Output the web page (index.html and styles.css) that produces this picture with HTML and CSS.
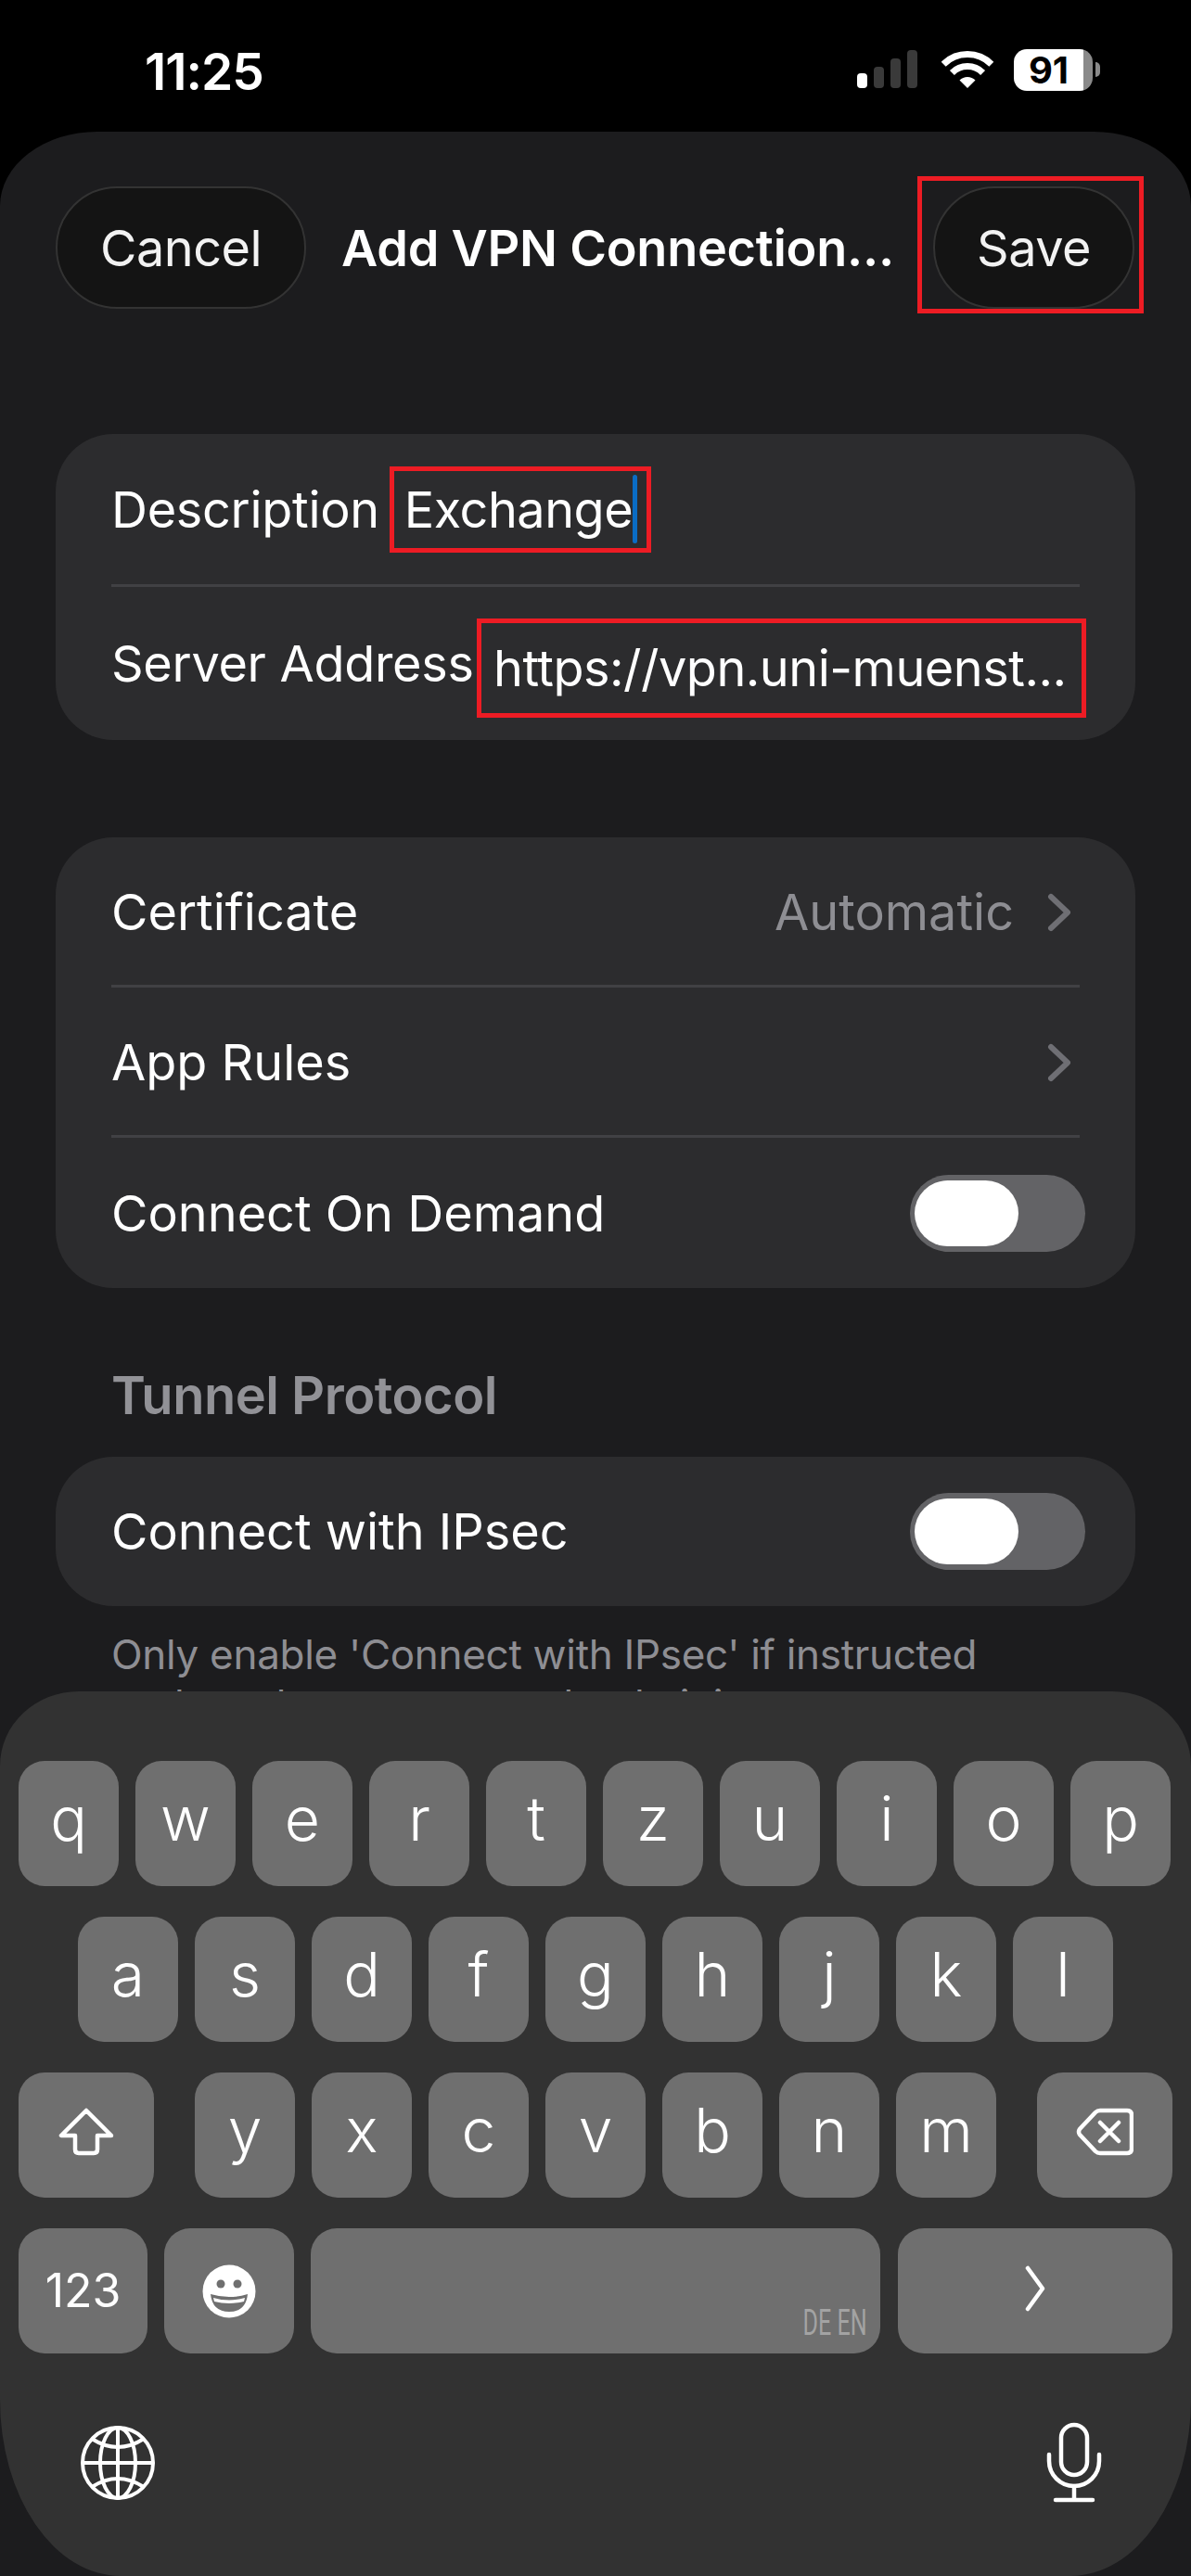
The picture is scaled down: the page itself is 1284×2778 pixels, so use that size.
FILE: index.html
```html
<!DOCTYPE html>
<html lang="en">
<head>
    <meta charset="UTF-8">
    <meta name="viewport" content="width=device-width, initial-scale=1.0">
    <title>Add VPN Connection</title>
    <link rel="stylesheet" href="styles.css">
</head>
<body>
    <div class="status-bar">
        <span class="time">11:25</span>
        <div class="status-icons">
            <svg class="signal" width="66" height="42" viewBox="0 0 66 42">
                <rect x="0" y="25" width="11" height="16" rx="4" fill="#fff"/>
                <rect x="18" y="18" width="11" height="23" rx="4" fill="#3a3a3a"/>
                <rect x="36" y="9" width="11" height="32" rx="4" fill="#3a3a3a"/>
                <rect x="54" y="0" width="11" height="41" rx="4" fill="#3a3a3a"/>
            </svg>
            <svg class="wifi" width="60" height="42" viewBox="0 0 60 42">
                <path d="M4.2 15.2 A36.5 36.5 0 0 1 55.8 15.2" fill="none" stroke="#fff" stroke-width="7"/>
                <path d="M13.4 24.4 A23.5 23.5 0 0 1 46.6 24.4" fill="none" stroke="#fff" stroke-width="7"/>
                <path d="M30 41 L21.5 32.5 A12 12 0 0 1 38.5 32.5 Z" fill="#fff"/>
            </svg>
            <div class="battery"><span>91</span></div>
            <div class="battery-nub"></div>
        </div>
    </div>

    <div class="sheet">
        <div class="nav">
            <button class="nav-btn cancel-btn">Cancel</button>
            <div class="nav-title">Add VPN Connection...</div>
            <div class="mark mark-save"><button class="nav-btn save-btn">Save</button></div>
        </div>

        <div class="group group-first">
            <div class="row row-desc">
                <span class="label">Description</span>
                <div class="mark mark-desc"><span class="field-text">Exchange</span><i class="caret"></i></div>
            </div>
            <div class="divider"></div>
            <div class="row row-server">
                <span class="label">Server Address</span>
                <div class="mark mark-server"><span class="field-text">https://vpn.uni-muenst...</span></div>
            </div>
        </div>

        <div class="group">
            <div class="row">
                <span>Certificate</span>
                <div class="row-value">
                    <span>Automatic</span>
                    <svg class="chevron" width="26" height="42" viewBox="0 0 26 42"><path d="M4 4 L22 21 L4 38" /></svg>
                </div>
            </div>
            <div class="divider"></div>
            <div class="row">
                <span>App Rules</span>
                <div class="row-value">
                    <svg class="chevron" width="26" height="42" viewBox="0 0 26 42"><path d="M4 4 L22 21 L4 38" /></svg>
                </div>
            </div>
            <div class="divider"></div>
            <div class="row row-last">
                <span>Connect On Demand</span>
                <div class="toggle"><div class="knob"></div></div>
            </div>
        </div>

        <div class="section-title">Tunnel Protocol</div>
        <div class="group group-single">
            <div class="row row-last">
                <span>Connect with IPsec</span>
                <div class="toggle"><div class="knob"></div></div>
            </div>
        </div>
        <p class="help">Only enable 'Connect with IPsec' if instructed<br>to do so by your network administrator.</p>

        <div class="keyboard">
            <div class="key-row">
                <span class="key">q</span><span class="key">w</span><span class="key">e</span><span class="key">r</span><span class="key">t</span><span class="key">z</span><span class="key">u</span><span class="key">i</span><span class="key">o</span><span class="key">p</span>
            </div>
            <div class="key-row key-row-center">
                <span class="key">a</span><span class="key">s</span><span class="key">d</span><span class="key">f</span><span class="key">g</span><span class="key">h</span><span class="key">j</span><span class="key">k</span><span class="key">l</span>
            </div>
            <div class="key-row key-row-split">
                <span class="key key-side">
                    <svg width="60" height="52" viewBox="0 0 60 52"><path class="icon-line" d="M30 3 L3 30 H18 V45 Q18 49 22 49 H38 Q42 49 42 45 V30 H57 Z"/></svg>
                </span>
                <div class="key-letters">
                    <span class="key">y</span><span class="key">x</span><span class="key">c</span><span class="key">v</span><span class="key">b</span><span class="key">n</span><span class="key">m</span>
                </div>
                <span class="key key-side">
                    <svg width="62" height="52" viewBox="0 0 62 52">
                        <path class="icon-line" d="M26 3 H55 Q60 3 60 8 V44 Q60 49 55 49 H26 Q23 49 21 47 L4 29 Q2 26 4 23 L21 5 Q23 3 26 3 Z"/>
                        <path class="icon-line" d="M26 16 L46 36 M46 16 L26 36"/>
                    </svg>
                </span>
            </div>
            <div class="key-row key-row-bottom">
                <span class="key key-123">123</span>
                <span class="key key-emoji">
                    <svg width="58" height="58" viewBox="0 0 58 58">
                        <circle cx="29" cy="29" r="28.5" fill="#fff"/>
                        <circle cx="20" cy="21" r="4.5" fill="#6f6f6f"/>
                        <circle cx="38" cy="21" r="4.5" fill="#6f6f6f"/>
                        <path d="M9 32 Q29 38 49 32 Q47 51 29 51 Q11 51 9 32 Z" fill="#6f6f6f"/>
                        <path d="M12 36 Q29 41 46 36 L45 40 Q29 44 13 40 Z" fill="#fff"/>
                    </svg>
                </span>
                <span class="key key-space"><small>DE EN</small></span>
                <span class="key key-return">
                    <svg width="22" height="50" viewBox="0 0 22 50"><path class="icon-line" d="M3 3 L19 25 L3 47"/></svg>
                </span>
            </div>
            <div class="kb-tools">
                <svg class="globe" width="82" height="82" viewBox="0 0 82 82">
                    <g fill="none" stroke="#fff" stroke-width="4">
                        <circle cx="41" cy="41" r="38"/>
                        <ellipse cx="41" cy="41" rx="19" ry="38"/>
                        <path d="M41 3 V79 M3 41 H79"/>
                        <path d="M13 15 Q41 33 69 15"/>
                        <path d="M13 67 Q41 49 69 67"/>
                    </g>
                </svg>
                <svg class="mic" width="60" height="88" viewBox="0 0 60 88">
                    <g fill="none" stroke="#fff" stroke-width="4.5" stroke-linecap="round">
                        <rect x="16" y="3" width="28" height="54" rx="14"/>
                        <path d="M3 35 V42 A27 27 0 0 0 57 42 V35"/>
                        <path d="M30 69 V84 M10 84 H50"/>
                    </g>
                </svg>
            </div>
        </div>
    </div>
</body>
</html>
```

FILE: styles.css
```css
* {
    box-sizing: border-box;
}
html, body {
    margin: 0;
    background: #000;
}
body {
    width: 1284px;
    height: 2778px;
    overflow: hidden;
    color: #fff;
    font-family: Inter, "Liberation Sans", sans-serif;
}

/* status bar */
.status-bar {
    height: 142px;
    display: flex;
    justify-content: space-between;
    align-items: center;
    padding: 12px 98px 0 156px;
}
.time {
    font-size: 55px;
    font-weight: 600;
    letter-spacing: -1px;
}
.status-icons {
    display: flex;
    align-items: center;
    margin-top: -4px;
}
.signal { margin-right: 23px; }
.wifi { margin-right: 20px; }
.battery {
    width: 85px;
    height: 45px;
    border-radius: 14px;
    background: linear-gradient(to right, #fff 88%, #8a8a8a 88%);
    display: flex;
    justify-content: center;
    align-items: center;
    padding-right: 10px;
    color: #000;
    font-size: 40px;
    font-weight: 700;
}
.battery-nub {
    width: 5px;
    height: 16px;
    margin-left: 3px;
    border-radius: 0 8px 8px 0;
    background: #8a8a8a;
}

/* sheet */
.sheet {
    position: relative;
    height: 2636px;
    overflow: hidden;
    padding-top: 48px;
    background: #1c1c1e;
    border-radius: 105px 105px 0 0 / 80px 80px 0 0;
}
.nav {
    height: 148px;
    display: flex;
    align-items: center;
    padding: 0 51px 0 60px;
}
.nav-btn {
    height: 132px;
    margin-top: 5px;
    padding: 2px 0 0;
    background: #141414;
    border: 2px solid #333;
    border-radius: 66px;
    color: #f2f2f2;
    font: 400 54px Inter, "Liberation Sans", sans-serif;
    letter-spacing: -0.5px;
}
.cancel-btn { width: 270px; }
.save-btn { width: 217px; }
.nav-title {
    flex: 1;
    padding: 6px 0 0 38px;
    font-size: 54px;
    font-weight: 600;
    letter-spacing: -0.25px;
    white-space: nowrap;
}

/* red marks drawn on the screenshot */
.mark {
    border: 5px solid #ed1c24;
    display: flex;
    align-items: center;
    flex: none;
}
.mark-save {
    height: 148px;
    padding: 0 5px 0 12px;
}
.mark-desc {
    width: 282px;
    height: 93px;
    margin-left: 11px;
    padding-left: 11px;
}
.mark-server {
    width: 657px;
    height: 107px;
    margin: 9px 0 0 auto;
    padding-left: 13px;
}
.field-text {
    letter-spacing: -0.5px;
    white-space: nowrap;
}
.caret {
    width: 5px;
    height: 74px;
    border-radius: 3px;
    background: #0a6cc4;
}

/* grouped list */
.group {
    margin: 105px 60px 0;
    background: #2c2c2e;
    border-radius: 62px;
    font-size: 54px;
}
.group-first { margin-top: 130px; }
.group-single { margin-top: 0; }
.row {
    height: 159px;
    display: flex;
    align-items: center;
    justify-content: space-between;
    padding: 2px 54px 0 60px;
}
.label {
    flex: none;
    white-space: nowrap;
    letter-spacing: -0.3px;
}
.row-desc, .row-server {
    justify-content: flex-start;
    padding-top: 0;
    padding-right: 53px;
}
.row-desc { height: 162px; }
.row-server { height: 165px; }
.row-last {
    height: 162px;
    padding-top: 0;
}
.group-single .row-last { height: 161px; }
.divider {
    height: 3px;
    margin: 0 60px;
    background: #414144;
}
.row-value {
    display: flex;
    align-items: center;
    color: #8e8e93;
}
.chevron {
    margin-left: 36px;
    margin-right: 15px;
    fill: none;
    stroke: #6f6f74;
    stroke-width: 6;
    stroke-linecap: round;
    stroke-linejoin: round;
}
.toggle {
    width: 189px;
    height: 83px;
    padding: 0 5px;
    display: flex;
    align-items: center;
    background: #636366;
    border-radius: 42px;
}
.knob {
    width: 112px;
    height: 71px;
    background: #fff;
    border-radius: 36px;
}
.section-title {
    margin: 85px 120px 34px;
    color: #929297;
    font-size: 56px;
    font-weight: 600;
    line-height: 63px;
    letter-spacing: -0.5px;
}
.help {
    margin: 25px 120px 0;
    color: #8e8e93;
    font-size: 44px;
    line-height: 54px;
    letter-spacing: -0.3px;
    white-space: nowrap;
}

/* keyboard, sits on top of the form */
.keyboard {
    position: absolute;
    left: 0;
    right: 0;
    bottom: 0;
    height: 954px;
    padding: 75px 20px 0;
    background: #323232;
    border-radius: 85px 85px 130px 130px / 80px 80px 190px 190px;
}
.key-row {
    display: flex;
    gap: 18px;
    margin-bottom: 33px;
}
.key-row-center { justify-content: center; }
.key-row-split { justify-content: space-between; }
.key-letters {
    display: flex;
    gap: 18px;
}
.key {
    width: 108px;
    height: 135px;
    padding-bottom: 12px;
    display: flex;
    justify-content: center;
    align-items: center;
    background: #6f6f6f;
    border-radius: 28px;
    font-size: 66px;
    font-weight: 300;
}
.key-side {
    width: 146px;
    padding-bottom: 8px;
}
.key-123 {
    width: 139px;
    padding-bottom: 2px;
    font-size: 50px;
    font-weight: 400;
}
.key-emoji {
    width: 140px;
    padding-bottom: 0;
}
.key-space {
    width: 614px;
    padding: 0 14px 18px 0;
    justify-content: flex-end;
    align-items: flex-end;
}
.key-space small {
    color: #a3a3a3;
    font-family: Roboto, sans-serif;
    font-size: 38px;
    font-weight: 400;
    line-height: 30px;
    transform: scaleX(0.66);
    transform-origin: right;
}
.key-return {
    width: 296px;
    margin-left: 1px;
    padding-bottom: 6px;
}
.icon-line {
    fill: none;
    stroke: #fff;
    stroke-width: 4.5;
    stroke-linecap: round;
    stroke-linejoin: round;
}
.kb-tools {
    display: flex;
    justify-content: space-between;
    align-items: center;
    margin-top: 74px;
    padding: 0 76px 0 66px;
}
```
